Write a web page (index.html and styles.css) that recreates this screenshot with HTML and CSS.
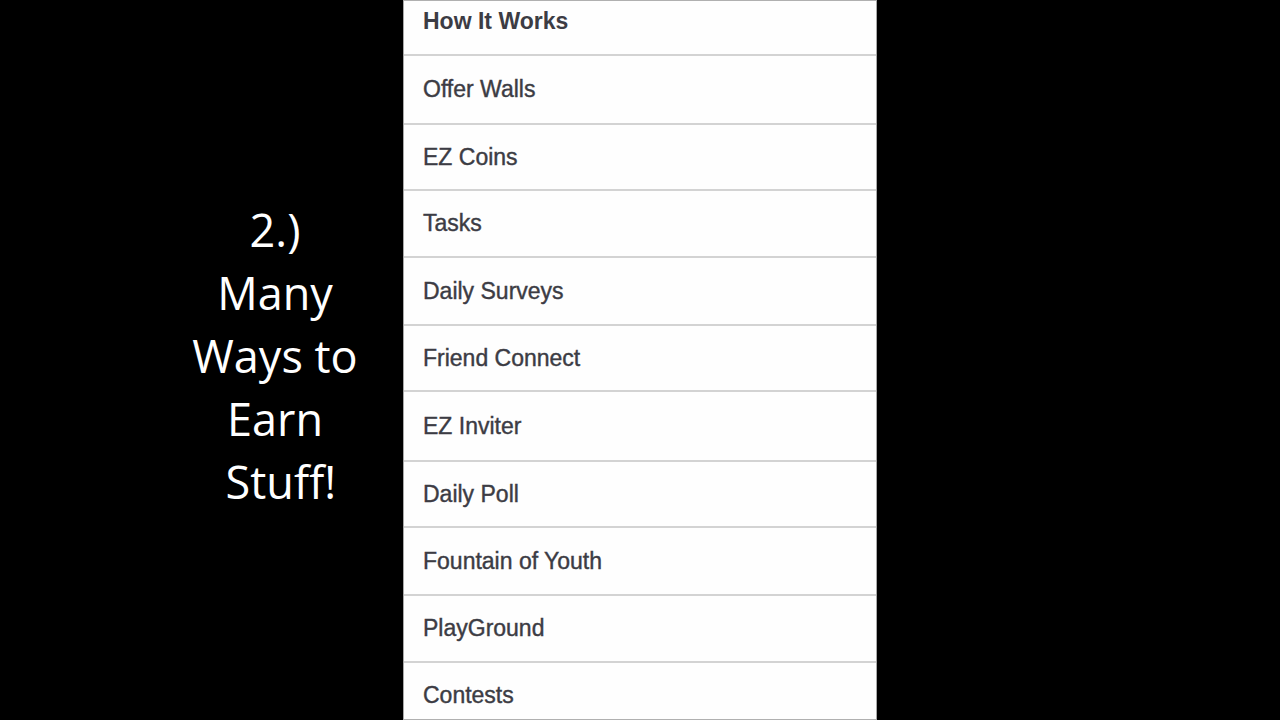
FILE: index.html
```html
<!DOCTYPE html>
<html>
<head>
<meta charset="utf-8">
<link rel="stylesheet" href="styles.css">
<title>Many Ways to Earn Stuff</title>
</head>
<body>
<div class="stage">
  <div class="caption-col">
    <div class="caption">2.)<br>Many<br>Ways to<br>Earn<br>&nbsp;Stuff!</div>
  </div>
  <ul class="menu">
    <li class="item item-first">How It Works</li>
    <li class="item">Offer Walls</li>
    <li class="item">EZ Coins</li>
    <li class="item">Tasks</li>
    <li class="item">Daily Surveys</li>
    <li class="item">Friend Connect</li>
    <li class="item">EZ Inviter</li>
    <li class="item">Daily Poll</li>
    <li class="item">Fountain of Youth</li>
    <li class="item">PlayGround</li>
    <li class="item item-last">Contests</li>
  </ul>
  <div class="right-col"></div>
</div>
</body>
</html>
```

FILE: styles.css
```css
html, body {
  margin: 0;
  padding: 0;
  background: #000;
  width: 1280px;
  height: 720px;
  overflow: hidden;
}

.stage {
  display: flex;
  width: 1280px;
  height: 720px;
  background: #000;
}

.caption-col {
  width: 403px;
  flex: none;
  padding-top: 198px;
  box-sizing: border-box;
}

.caption {
  width: 240px;
  margin-left: 155px;
  text-align: center;
  color: #fff;
  font-family: "Open Sans", "Noto Sans", sans-serif;
  font-size: 45px;
  line-height: 63px;
}

.menu {
  list-style: none;
  margin: 0;
  padding: 0;
  width: 474px;
  height: 720px;
  flex: none;
  box-sizing: border-box;
  background: #fefefe;
  border-left: 1px solid #a8a8a8;
  border-right: 1px solid #a8a8a8;
  border-top: 1px solid #b0b0b0;
  border-bottom: 1px solid #b0b0b0;
  display: flex;
  flex-direction: column;
  overflow: hidden;
}

.item {
  flex: none;
  display: flex;
  align-items: center;
  padding-left: 19px;
  border-bottom: 2px solid #d3d3d3;
  font-family: "Liberation Sans", Arial, sans-serif;
  font-size: 23px;
  color: #3c3c44;
  -webkit-text-stroke: 0.4px #3c3c44;
  white-space: nowrap;
}

.item:nth-child(2) { height: 67px; }
.item:nth-child(3) { height: 64px; }
.item:nth-child(4) { height: 65px; }
.item:nth-child(5) { height: 66px; }
.item:nth-child(6) { height: 64px; }
.item:nth-child(7) { height: 68px; }
.item:nth-child(8) { height: 64px; }
.item:nth-child(9) { height: 66px; }
.item:nth-child(10) { height: 65px; }

.item-first {
  height: 55px;
  box-sizing: border-box;
  font-weight: bold;
  -webkit-text-stroke: 0;
  align-items: flex-start;
  padding-top: 7px;
}

.item-last {
  flex: 1;
  border-bottom: none;
  align-items: center;
  padding-top: 8px;
}

.right-col {
  flex: 1;
  background: #000;
}
```
